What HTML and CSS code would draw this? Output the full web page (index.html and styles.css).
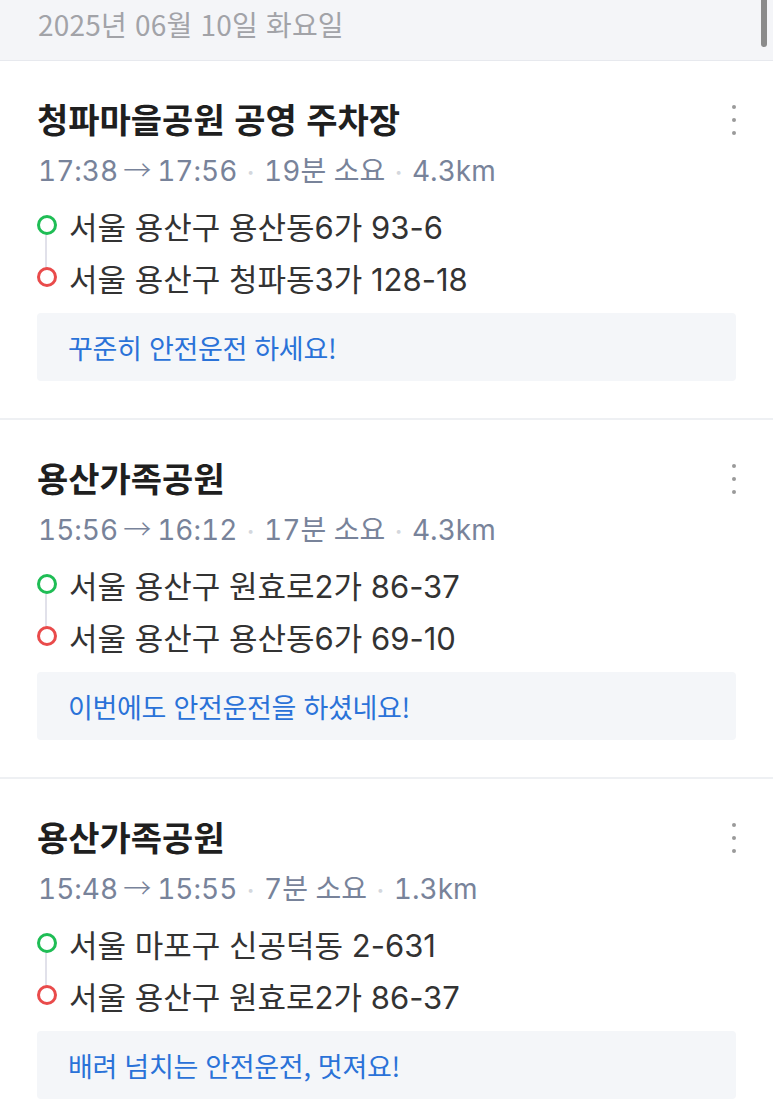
FILE: index.html
```html
<!DOCTYPE html>
<html lang="ko">
<head>
<meta charset="utf-8">
<title>주행 기록</title>
<link rel="stylesheet" href="styles.css">
</head>
<body>
<div class="page">
  <header class="date-header">2025년 06월 10일 화요일</header>

  <section class="trip">
    <div class="kebab"><span></span><span></span><span></span></div>
    <h2 class="title">청파마을공원 공영 주차장</h2>
    <div class="meta">17:38<span class="arrow">→</span>17:56<span class="sep">•</span>19분 소요<span class="sep">•</span>4.3km</div>
    <ul class="route">
      <li><i class="pin start"></i>서울 용산구 용산동6가 93-6</li>
      <li><i class="pin end"></i>서울 용산구 청파동3가 128-18</li>
    </ul>
    <div class="message">꾸준히 안전운전 하세요!</div>
  </section>

  <section class="trip">
    <div class="kebab"><span></span><span></span><span></span></div>
    <h2 class="title">용산가족공원</h2>
    <div class="meta">15:56<span class="arrow">→</span>16:12<span class="sep">•</span>17분 소요<span class="sep">•</span>4.3km</div>
    <ul class="route">
      <li><i class="pin start"></i>서울 용산구 원효로2가 86-37</li>
      <li><i class="pin end"></i>서울 용산구 용산동6가 69-10</li>
    </ul>
    <div class="message">이번에도 안전운전을 하셨네요!</div>
  </section>

  <section class="trip">
    <div class="kebab"><span></span><span></span><span></span></div>
    <h2 class="title">용산가족공원</h2>
    <div class="meta">15:48<span class="arrow">→</span>15:55<span class="sep">•</span>7분 소요<span class="sep">•</span>1.3km</div>
    <ul class="route">
      <li><i class="pin start"></i>서울 마포구 신공덕동 2-631</li>
      <li><i class="pin end"></i>서울 용산구 원효로2가 86-37</li>
    </ul>
    <div class="message">배려 넘치는 안전운전, 멋져요!</div>
  </section>

  <div class="scrollbar"></div>
</div>
</body>
</html>
```

FILE: styles.css
```css
* { box-sizing: border-box; }
html, body { margin: 0; padding: 0; background: #ffffff; }
body {
  font-family: "Inter", "Noto Sans CJK KR", "Noto Sans", sans-serif;
  color: #333333;
}
.page { position: relative; width: 773px; overflow: hidden; }

.date-header {
  height: 61px;
  background: #f4f5f8;
  border-bottom: 1px solid #e7e9ee;
  padding: 4px 0 0 38px;
  font-family: "Noto Sans CJK KR", sans-serif;
  font-size: 28px;
  line-height: 40px;
  color: #a2a3a8;
  letter-spacing: 0.2px;
}

.trip {
  position: relative;
  padding: 38px 37px 37px 37px;
  border-bottom: 2px solid #eef0f3;
}
.title {
  margin: 0;
  font-family: "Noto Sans CJK KR", sans-serif;
  font-size: 34px;
  line-height: 40px;
  font-weight: 700;
  color: #1f1f1f;
}
.meta {
  margin: 12px 0 0 1px;
  height: 36px;
  font-size: 28px;
  line-height: 36px;
  color: #78839a;
  font-variant-numeric: tabular-nums;
  white-space: nowrap;
}
.meta .arrow {
  font-family: "Noto Sans CJK KR", sans-serif;
  font-weight: 300;
  margin: 0 6px 0 5px;
}
.meta .sep {
  display: inline-block;
  margin: 0 10px;
  font-size: 12px;
  vertical-align: 5px;
  color: #d4d7dd;
}
.route {
  position: relative;
  list-style: none;
  margin: 12px 0 0 0;
  padding: 0;
}
.route::before {
  content: "";
  position: absolute;
  left: 8px;
  top: 32px;
  height: 40px;
  width: 2px;
  background: #e1e1ea;
}
.route li {
  display: flex;
  align-items: center;
  gap: 12px;
  height: 52px;
  font-size: 31px;
  color: #333333;
}
.pin {
  position: relative;
  flex: 0 0 18px;
  height: 18px;
  display: flex;
  align-items: center;
  justify-content: center;
}
.pin::after {
  content: "";
  width: 14px;
  height: 14px;
  border-radius: 50%;
  background: #fff;
  border: 3.5px solid currentColor;
}
.pin.start { color: #1fbd55; }
.pin.end { color: #e94b4b; }

.message {
  margin-top: 10px;
  height: 68px;
  background: #f4f6f9;
  border-radius: 4px;
  padding-left: 31px;
  display: flex;
  align-items: center;
  font-family: "Noto Sans CJK KR", sans-serif;
  font-size: 27px;
  color: #2a72d8;
  letter-spacing: -0.3px;
}

.kebab {
  position: absolute;
  top: 44px;
  right: 37px;
  display: flex;
  flex-direction: column;
  gap: 9px;
}
.kebab span {
  width: 4px;
  height: 4px;
  border-radius: 50%;
  background: #9a9a9a;
}

.scrollbar {
  position: absolute;
  top: -6px;
  left: 761px;
  width: 6px;
  height: 53px;
  border-radius: 3px;
  background: #8b8b8b;
}
```
